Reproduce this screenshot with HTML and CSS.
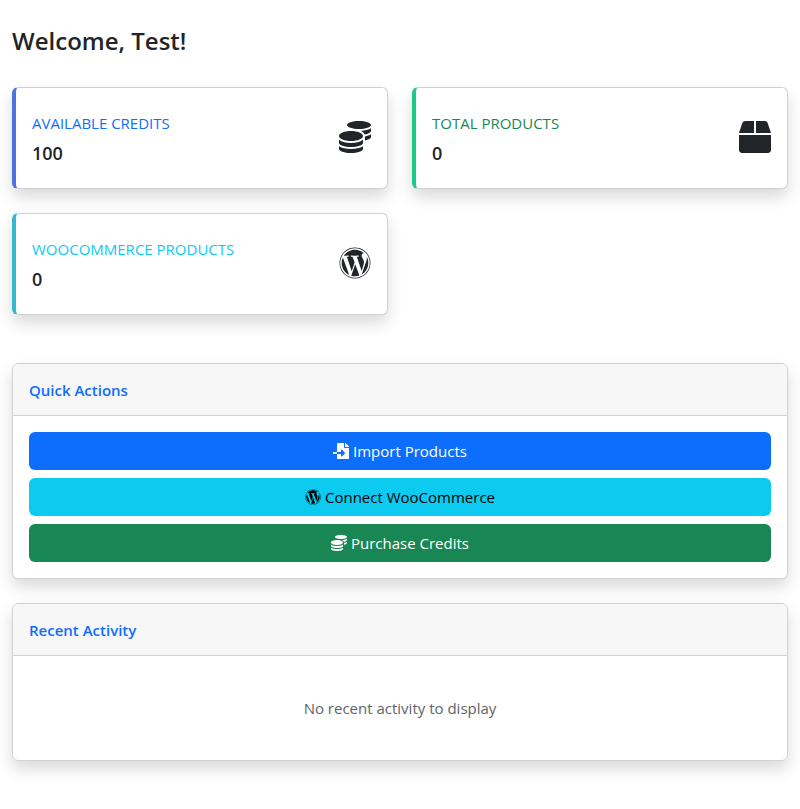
FILE: index.html
```html
<!DOCTYPE html>
<html lang="en">
<head>
<meta charset="utf-8">
<meta name="viewport" content="width=device-width, initial-scale=1">
<title>Dashboard</title>
<link rel="stylesheet" href="styles.css">
</head>
<body>
<svg class="sprite" aria-hidden="true">
  <symbol id="coins" viewBox="0 0 512 512"><path d="M0 405.3V448c0 35.3 86 64 192 64s192-28.7 192-64v-42.7C342.7 434.4 267.2 448 192 448S41.3 434.4 0 405.3zM320 128c106 0 192-28.7 192-64S426 0 320 0 128 28.7 128 64s86 64 192 64zM0 300.4V352c0 35.3 86 64 192 64s192-28.7 192-64v-51.6c-41.3 34-116.9 51.6-192 51.6S41.3 334.4 0 300.4zm416 11c57.3-11.1 96-31.7 96-55.4v-42.7c-23.2 16.4-57.3 27.6-96 34.5v63.6zM192 160C86 160 0 195.8 0 240s86 80 192 80 192-35.8 192-80-86-80-192-80zm219.3 56.3c60-10.8 100.7-32 100.7-56.3v-42.7c-35.5 25.1-96.5 38.6-160.7 41.8 29.5 14.3 51.2 33.5 60 57.2z"/></symbol>
  <symbol id="box" viewBox="0 0 512 512"><path d="M509.5 184.6L458.9 32.8C452.4 13.2 434.1 0 413.4 0H272v192h238.7c-.4-2.5-.4-5-1.2-7.4zM240 0H98.6c-20.7 0-39 13.2-45.5 32.8L2.5 184.6c-.8 2.4-.8 4.9-1.2 7.4H240V0zM0 224v240c0 26.5 21.5 48 48 48h416c26.5 0 48-21.5 48-48V224H0z"/></symbol>
  <symbol id="file-import" viewBox="0 0 512 512"><path d="M16 288c-8.8 0-16 7.2-16 16v32c0 8.8 7.2 16 16 16h112v-64zm489-183L407.1 7c-4.5-4.5-10.6-7-17-7H384v128h128v-6.1c0-6.3-2.5-12.4-7-16.9zm-153 31V0H152c-13.3 0-24 10.7-24 24v264h128v-65.2c0-14.3 17.3-21.4 27.4-11.3L379 308c6.6 6.7 6.6 17.4 0 24l-95.7 96.4c-10.1 10.1-27.4 3-27.4-11.3V352H128v136c0 13.3 10.7 24 24 24h336c13.3 0 24-10.7 24-24V160H376c-13.2 0-24-10.8-24-24z"/></symbol>
  <symbol id="wordpress" viewBox="0 0 512 512"><path d="M61.7 169.4l101.5 278C92.2 413 43.3 340.2 43.3 256c0-30.9 6.6-60.1 18.4-86.6zm337.9 75.9c0-26.3-9.4-44.5-17.5-58.7-10.8-17.5-20.9-32.4-20.9-49.9 0-19.6 14.8-37.8 35.7-37.8.9 0 1.8.1 2.8.2-37.9-34.7-88.3-55.9-143.7-55.9-74.3 0-139.7 38.1-177.8 95.9 5 .2 9.7.3 13.7.3 22.2 0 56.7-2.7 56.7-2.7 11.5-.7 12.8 16.2 1.4 17.5 0 0-11.5 1.3-24.3 2l77.5 230.4L249.8 247l-33.1-90.8c-11.5-.7-22.3-2-22.3-2-11.5-.7-10.1-18.2 1.3-17.5 0 0 35.1 2.7 56 2.7 22.2 0 56.7-2.7 56.7-2.7 11.5-.7 12.8 16.2 1.4 17.5 0 0-11.5 1.3-24.3 2l76.9 228.7 21.2-70.9c9-29.4 16-50.5 16-68.7zm-139.9 29.3l-63.8 185.5c19.1 5.6 39.2 8.7 60.1 8.7 24.8 0 48.5-4.3 70.6-12.1-.6-.9-1.1-1.9-1.5-2.9l-65.4-179.2zm183-120.7c.9 6.8 1.4 14 1.4 21.9 0 21.6-4 45.8-16.2 76.2l-65 187.9C426.2 403 468.7 334.5 468.7 256c0-37-9.4-71.8-26-102.1zM504 256c0 136.8-111.3 248-248 248C119.2 504 8 392.7 8 256 8 119.2 119.2 8 256 8c136.7 0 248 111.2 248 248zm-11.4 0c0-130.5-106.2-236.6-236.6-236.6C125.5 19.4 19.4 125.5 19.4 256S125.6 492.6 256 492.6c130.5 0 236.6-106.1 236.6-236.6z"/></symbol>
</svg>

<main class="page">
  <h1 class="page-title">Welcome, Test!</h1>

  <section class="stats">
    <article class="card stat stat-credits">
      <div>
        <h2 class="stat-label">Available Credits</h2>
        <p class="stat-value">100</p>
      </div>
      <svg class="stat-icon" aria-hidden="true"><use href="#coins"/></svg>
    </article>
    <article class="card stat stat-products">
      <div>
        <h2 class="stat-label">Total Products</h2>
        <p class="stat-value">0</p>
      </div>
      <svg class="stat-icon" aria-hidden="true"><use href="#box"/></svg>
    </article>
    <article class="card stat stat-woo">
      <div>
        <h2 class="stat-label">WooCommerce Products</h2>
        <p class="stat-value">0</p>
      </div>
      <svg class="stat-icon" aria-hidden="true"><use href="#wordpress"/></svg>
    </article>
  </section>

  <section class="panels">
    <article class="card">
      <h2 class="card-header">Quick Actions</h2>
      <div class="card-body actions">
        <a class="btn btn-primary" href="#"><svg class="btn-icon" aria-hidden="true"><use href="#file-import"/></svg>Import Products</a>
        <a class="btn btn-info" href="#"><svg class="btn-icon" aria-hidden="true"><use href="#wordpress"/></svg>Connect WooCommerce</a>
        <a class="btn btn-success" href="#"><svg class="btn-icon" aria-hidden="true"><use href="#coins"/></svg>Purchase Credits</a>
      </div>
    </article>
    <article class="card">
      <h2 class="card-header">Recent Activity</h2>
      <div class="card-body">
        <p class="empty">No recent activity to display</p>
      </div>
    </article>
  </section>
</main>
</body>
</html>
```
FILE: styles.css
```css
* {
  box-sizing: border-box;
}

body {
  margin: 0;
  background: #fff;
  color: #212529;
  font-family: "Segoe UI", "Open Sans", "Noto Sans", sans-serif;
  font-size: 15px;
  line-height: 24px;
}

h1,
h2,
p {
  margin: 0;
}

.sprite {
  display: none;
}

.page {
  padding: 24px 12px;
}

.page-title {
  margin-bottom: 30px;
  font-size: 24px;
  font-weight: 600;
  line-height: 33px;
}

.card {
  border: 1px solid #d0d1d3;
  border-radius: 6px;
  background: #fff;
  box-shadow: 0 8px 16px rgba(0, 0, 0, 0.15);
}

.stats {
  display: grid;
  grid-template-columns: repeat(2, minmax(0, 1fr));
  gap: 24px;
  margin-bottom: 48px;
}

.stat {
  display: flex;
  align-items: center;
  justify-content: space-between;
  padding: 24px 16px;
  border-left-width: 4px;
}

.stat-label {
  margin-bottom: 8px;
  font-size: 15px;
  font-weight: 400;
  line-height: 22px;
  text-transform: uppercase;
}

.stat-value {
  font-size: 18px;
  font-weight: 600;
  line-height: 22px;
}

.stat-icon {
  width: 32px;
  height: 32px;
  margin-bottom: 2px;
  fill: currentColor;
}

.stat-credits {
  border-left-color: #4e73df;
}

.stat-credits .stat-label {
  color: #0d6efd;
}

.stat-products {
  border-left-color: #1cc88a;
}

.stat-products .stat-label {
  color: #198754;
}

.stat-woo {
  border-left-color: #36b9cc;
}

.stat-woo .stat-label {
  color: #0dcaf0;
}

.panels {
  display: grid;
  gap: 24px;
}

.card-header {
  padding: 16px 16px 14px;
  border-bottom: 1px solid #d0d1d3;
  border-radius: 5px 5px 0 0;
  background: #f7f7f7;
  color: #0d6efd;
  font-size: 15px;
  font-weight: 600;
  line-height: 21px;
}

.card-body {
  padding: 16px;
}

.actions {
  display: grid;
  gap: 8px;
}

.btn {
  display: flex;
  align-items: center;
  justify-content: center;
  gap: 4px;
  padding: 7px 12px;
  border-radius: 6px;
  color: #fff;
  text-decoration: none;
}

.btn-icon {
  width: 16px;
  height: 16px;
  fill: currentColor;
}

.btn-primary {
  background: #0d6efd;
}

.btn-info {
  background: #0dcaf0;
  color: #000;
}

.btn-success {
  background: #198754;
}

.empty {
  padding: 24px 0;
  color: #5e6469;
  text-align: center;
}
```
